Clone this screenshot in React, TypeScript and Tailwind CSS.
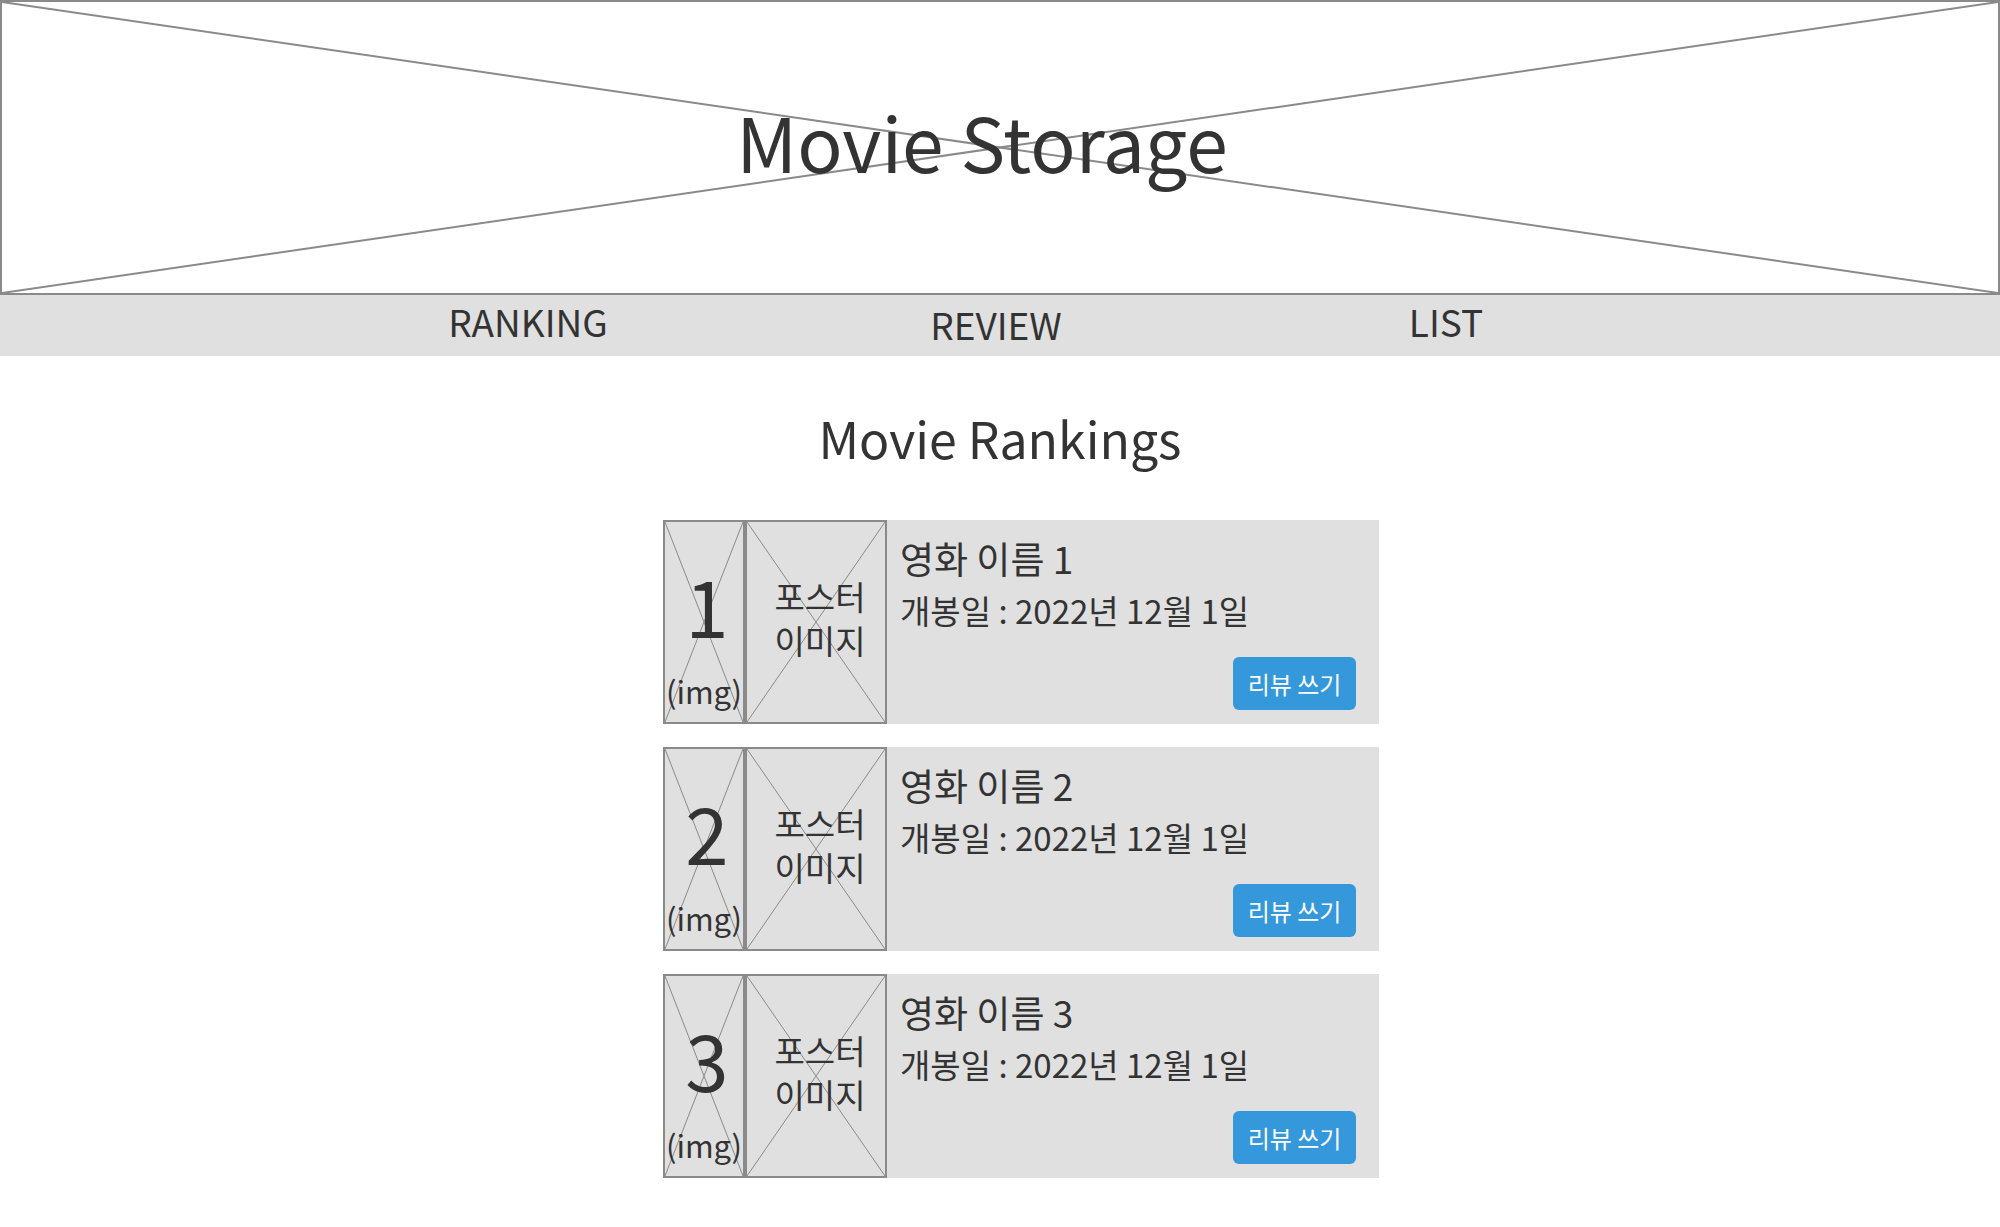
import React from 'react';

const font = { fontFamily: '"Noto Sans CJK KR", "Noto Sans", sans-serif' };

// Placeholder cross drawn over a box, corner to corner
function Cross({ width = 1, color = '#8a8a8a' }: { width?: number; color?: string }) {
  return (
    <svg
      className="absolute inset-0 w-full h-full pointer-events-none"
      viewBox="0 0 100 100"
      preserveAspectRatio="none"
    >
      <line x1="0" y1="0" x2="100" y2="100" stroke={color} strokeWidth={width} vectorEffect="non-scaling-stroke" />
      <line x1="100" y1="0" x2="0" y2="100" stroke={color} strokeWidth={width} vectorEffect="non-scaling-stroke" />
    </svg>
  );
}

const movies = [
  { rank: 1, title: '영화 이름 1', date: '개봉일 : 2022년 12월 1일' },
  { rank: 2, title: '영화 이름 2', date: '개봉일 : 2022년 12월 1일' },
  { rank: 3, title: '영화 이름 3', date: '개봉일 : 2022년 12월 1일' },
];

function MovieCard({ rank, title, date }: { rank: number; title: string; date: string }) {
  return (
    <div className="flex h-[204px] w-[716px] bg-[#e0e0e0]">
      {/* Rank image */}
      <div className="relative w-[82px] h-full border-2 border-[#8a8a8a] flex flex-col items-center pt-[43px] overflow-hidden">
        <Cross />
        <span className="relative pl-[6px] text-[78px] leading-none text-[#333]">{rank}</span>
        <span className="relative mt-[32px] text-[31px] leading-none text-[#333]">(img)</span>
      </div>
      {/* Poster */}
      <div className="relative w-[142px] h-full border-2 border-[#8a8a8a] flex flex-col items-center justify-center pb-[8px] pl-[8px]">
        <Cross />
        <span className="relative text-[33px] leading-[44px] text-[#333]">포스터</span>
        <span className="relative text-[33px] leading-[44px] text-[#333]">이미지</span>
      </div>
      {/* Info */}
      <div className="flex-1 flex flex-col pl-[13px] pt-[20px] pr-[23px] pb-[14px]">
        <div className="text-[37px] leading-none text-[#333]">{title}</div>
        <div className="mt-[17px] text-[33px] leading-none text-[#333]">{date}</div>
        <button className="mt-auto self-end w-[123px] h-[53px] rounded-[6px] bg-[#3498db] text-white text-[24px] leading-none">
          리뷰 쓰기
        </button>
      </div>
    </div>
  );
}

export default function App() {
  return (
    <div className="w-[2000px] min-h-[1227px] bg-white" style={font}>
      {/* Header */}
      <div className="relative h-[295px] border-2 border-[#8a8a8a] flex justify-center pt-[101px] pr-[36px]">
        <Cross width={2} />
        <h1 className="relative text-[75px] leading-none text-[#333] font-normal">Movie Storage</h1>
      </div>

      {/* Nav */}
      <nav className="h-[61px] bg-[#e0e0e0] flex items-start pt-[8px] pl-[378px] text-[37px] leading-none text-[#333]">
        <a className="w-[300px] text-center">RANKING</a>
        <a className="w-[300px] ml-[168px] text-center pt-[3px]">REVIEW</a>
        <a className="w-[300px] ml-[150px] text-center">LIST</a>
      </nav>

      {/* Rankings */}
      <div className="pt-[56px]">
        <h2 className="text-center text-[50px] leading-none text-[#333] font-normal">Movie Rankings</h2>
        <div className="mt-[58px] ml-[663px] flex flex-col gap-[23px]">
          {movies.map((m) => (
            <MovieCard key={m.rank} {...m} />
          ))}
        </div>
      </div>
    </div>
  );
}
